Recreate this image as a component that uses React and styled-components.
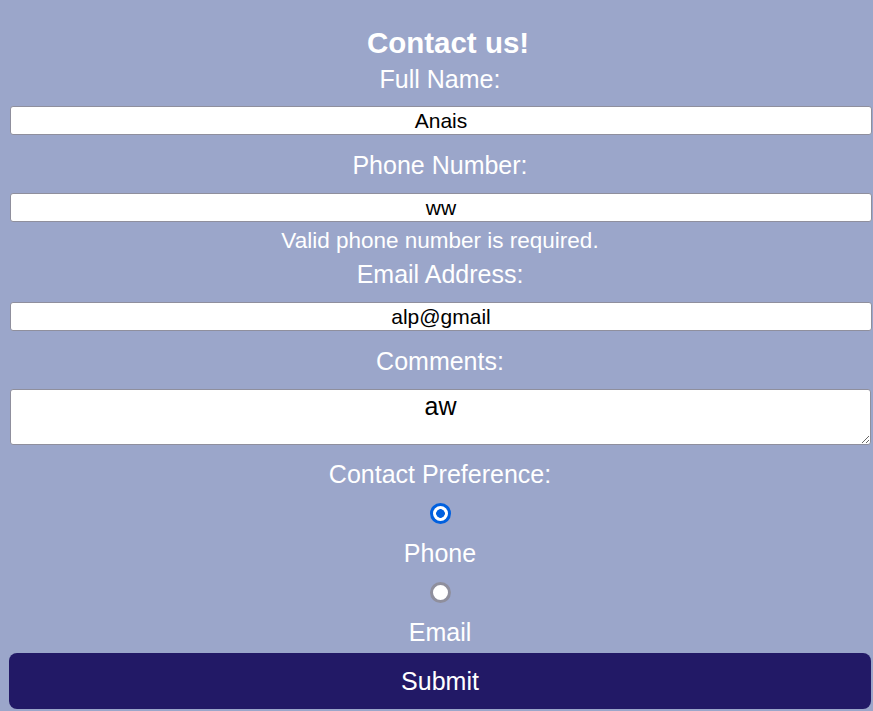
import React, { useState } from "react";
import styled, { createGlobalStyle } from "styled-components";

const Global = createGlobalStyle`
  html, body { margin: 0; padding: 0; background: #9ba6ca; }
  body { font-family: "Liberation Sans", Arial, sans-serif; }
  * { box-sizing: border-box; }
`;

const Form = styled.form`
  display: flex;
  flex-direction: column;
  align-items: stretch;
  padding: 26px 2px 2px 9px;
  min-height: 711px;
  background: #9ba6ca;
  color: #ffffff;
  text-align: center;
`;

const Title = styled.h2`
  margin: 0;
  padding-left: 16px;
  font-size: 29.5px;
  line-height: 34px;
  font-weight: 700;
  color: #ffffff;
`;

const Label = styled.label`
  display: block;
  margin: ${(p) => p.$top ?? 16}px 0 ${(p) => p.$bottom ?? 14}px;
  font-size: 25px;
  line-height: 28px;
  color: #ffffff;
`;

const Field = styled.input`
  display: block;
  width: 100%;
  height: 29px;
  margin: 0 0 0 1px;
  padding: 1px 2px;
  border: 1px solid #8f8f9d;
  border-radius: 3px;
  background: #ffffff;
  color: #000000;
  font-family: "Liberation Sans", Arial, sans-serif;
  font-size: 21px;
  text-align: center;
  outline: none;
`;

const Area = styled.textarea`
  display: block;
  width: calc(100% - 1px);
  height: 56px;
  margin: 0 0 0 1px;
  padding: 2px 2px;
  border: 1px solid #8f8f9d;
  border-radius: 3px;
  background: #ffffff;
  color: #000000;
  font-family: "Liberation Sans", Arial, sans-serif;
  font-size: 25px;
  line-height: 29px;
  text-align: center;
  resize: vertical;
  outline: none;
`;

const ErrorText = styled.div`
  margin-top: 6px;
  font-size: 22.5px;
  line-height: 26px;
  color: #ffffff;
`;

const Radio = styled.input.attrs({ type: "radio" })`
  appearance: none;
  -webkit-appearance: none;
  display: block;
  width: 21px;
  height: 21px;
  margin: 15px auto 0;
  border-radius: 50%;
  background: #ffffff;
  border: 3px solid #8f8f9d;
  cursor: pointer;

  &:checked {
    border-color: #0060df;
    background: radial-gradient(circle, #0060df 0 4px, #ffffff 4.6px);
  }
`;

const OptionLabel = styled.label`
  display: block;
  margin-top: 15px;
  font-size: 25px;
  line-height: 28px;
  color: #ffffff;
`;

const Submit = styled.button`
  display: block;
  width: 100%;
  height: 56px;
  margin-top: 7px;
  border: none;
  border-radius: 8px;
  background: #221966;
  color: #ffffff;
  font-family: "Liberation Sans", Arial, sans-serif;
  font-size: 25px;
  cursor: pointer;
`;

export default function App() {
  const [pref, setPref] = useState("phone");
  const [name, setName] = useState("Anais");
  const [phone, setPhone] = useState("ww");
  const [email, setEmail] = useState("alp@gmail");
  const [comments, setComments] = useState("aw");

  return (
    <>
      <Global />
      <Form onSubmit={(e) => e.preventDefault()}>
        <Title>Contact us!</Title>
        <Label htmlFor="name" $top={5} $bottom={13}>Full Name:</Label>
        <Field id="name" value={name} onChange={(e) => setName(e.target.value)} />
        <Label htmlFor="phone">Phone Number:</Label>
        <Field id="phone" value={phone} onChange={(e) => setPhone(e.target.value)} />
        <ErrorText>Valid phone number is required.</ErrorText>
        <Label htmlFor="email" $top={6}>Email Address:</Label>
        <Field id="email" value={email} onChange={(e) => setEmail(e.target.value)} />
        <Label htmlFor="comments">Comments:</Label>
        <Area id="comments" value={comments} onChange={(e) => setComments(e.target.value)} />
        <Label $top={15} $bottom={0}>Contact Preference:</Label>
        <Radio
          id="pref-phone"
          name="pref"
          checked={pref === "phone"}
          onChange={() => setPref("phone")}
        />
        <OptionLabel htmlFor="pref-phone">Phone</OptionLabel>
        <Radio
          id="pref-email"
          name="pref"
          checked={pref === "email"}
          onChange={() => setPref("email")}
        />
        <OptionLabel htmlFor="pref-email">Email</OptionLabel>
        <Submit type="submit">Submit</Submit>
      </Form>
    </>
  );
}
